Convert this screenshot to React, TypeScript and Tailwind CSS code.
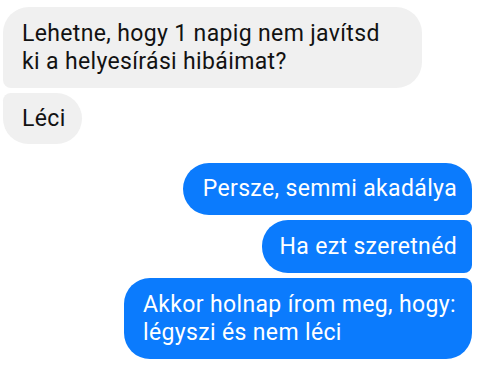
import React from "react";

const font = { fontFamily: "Roboto, 'Noto Sans', sans-serif" };

const App = () => {
  return (
    <div className="w-[480px] h-[366px] bg-white overflow-hidden" style={font}>
      <div className="flex flex-col pt-[7px] pl-[3px] pr-[8px] text-[23px] leading-[28px] tracking-[0.35px]">
        <div className="w-[419px] h-[81px] bg-[#f0f0f0] rounded-[26px] rounded-bl-[8px] pl-[19px] flex items-center text-[#121212]">
          <p>
            Lehetne, hogy 1 napig nem javítsd
            <br />
            ki a helyesírási hibáimat?
          </p>
        </div>
        <div className="mt-[5px] w-[79px] h-[51px] bg-[#f0f0f0] rounded-[26px] rounded-tl-[8px] pl-[19px] flex items-center text-[#121212]">
          Léci
        </div>

        <div className="mt-[19px] flex flex-col items-end gap-[5px]">
          <div className="w-[289px] h-[52px] bg-[#0b7bfd] rounded-[26px] rounded-br-[8px] pr-[15px] flex items-center justify-end text-white">
            Persze, semmi akadálya
          </div>
          <div className="w-[210px] h-[53px] bg-[#0b7bfd] rounded-[26px] rounded-r-[8px] pr-[15px] flex items-center justify-end text-white">
            Ha ezt szeretnéd
          </div>
          <div className="w-[348px] h-[81px] bg-[#0b7bfd] rounded-[26px] rounded-tr-[8px] pl-[19px] flex items-center text-white">
            <p>
              Akkor holnap írom meg, hogy:
              <br />
              légyszi és nem léci
            </p>
          </div>
        </div>
      </div>
    </div>
  );
};

export default App;
